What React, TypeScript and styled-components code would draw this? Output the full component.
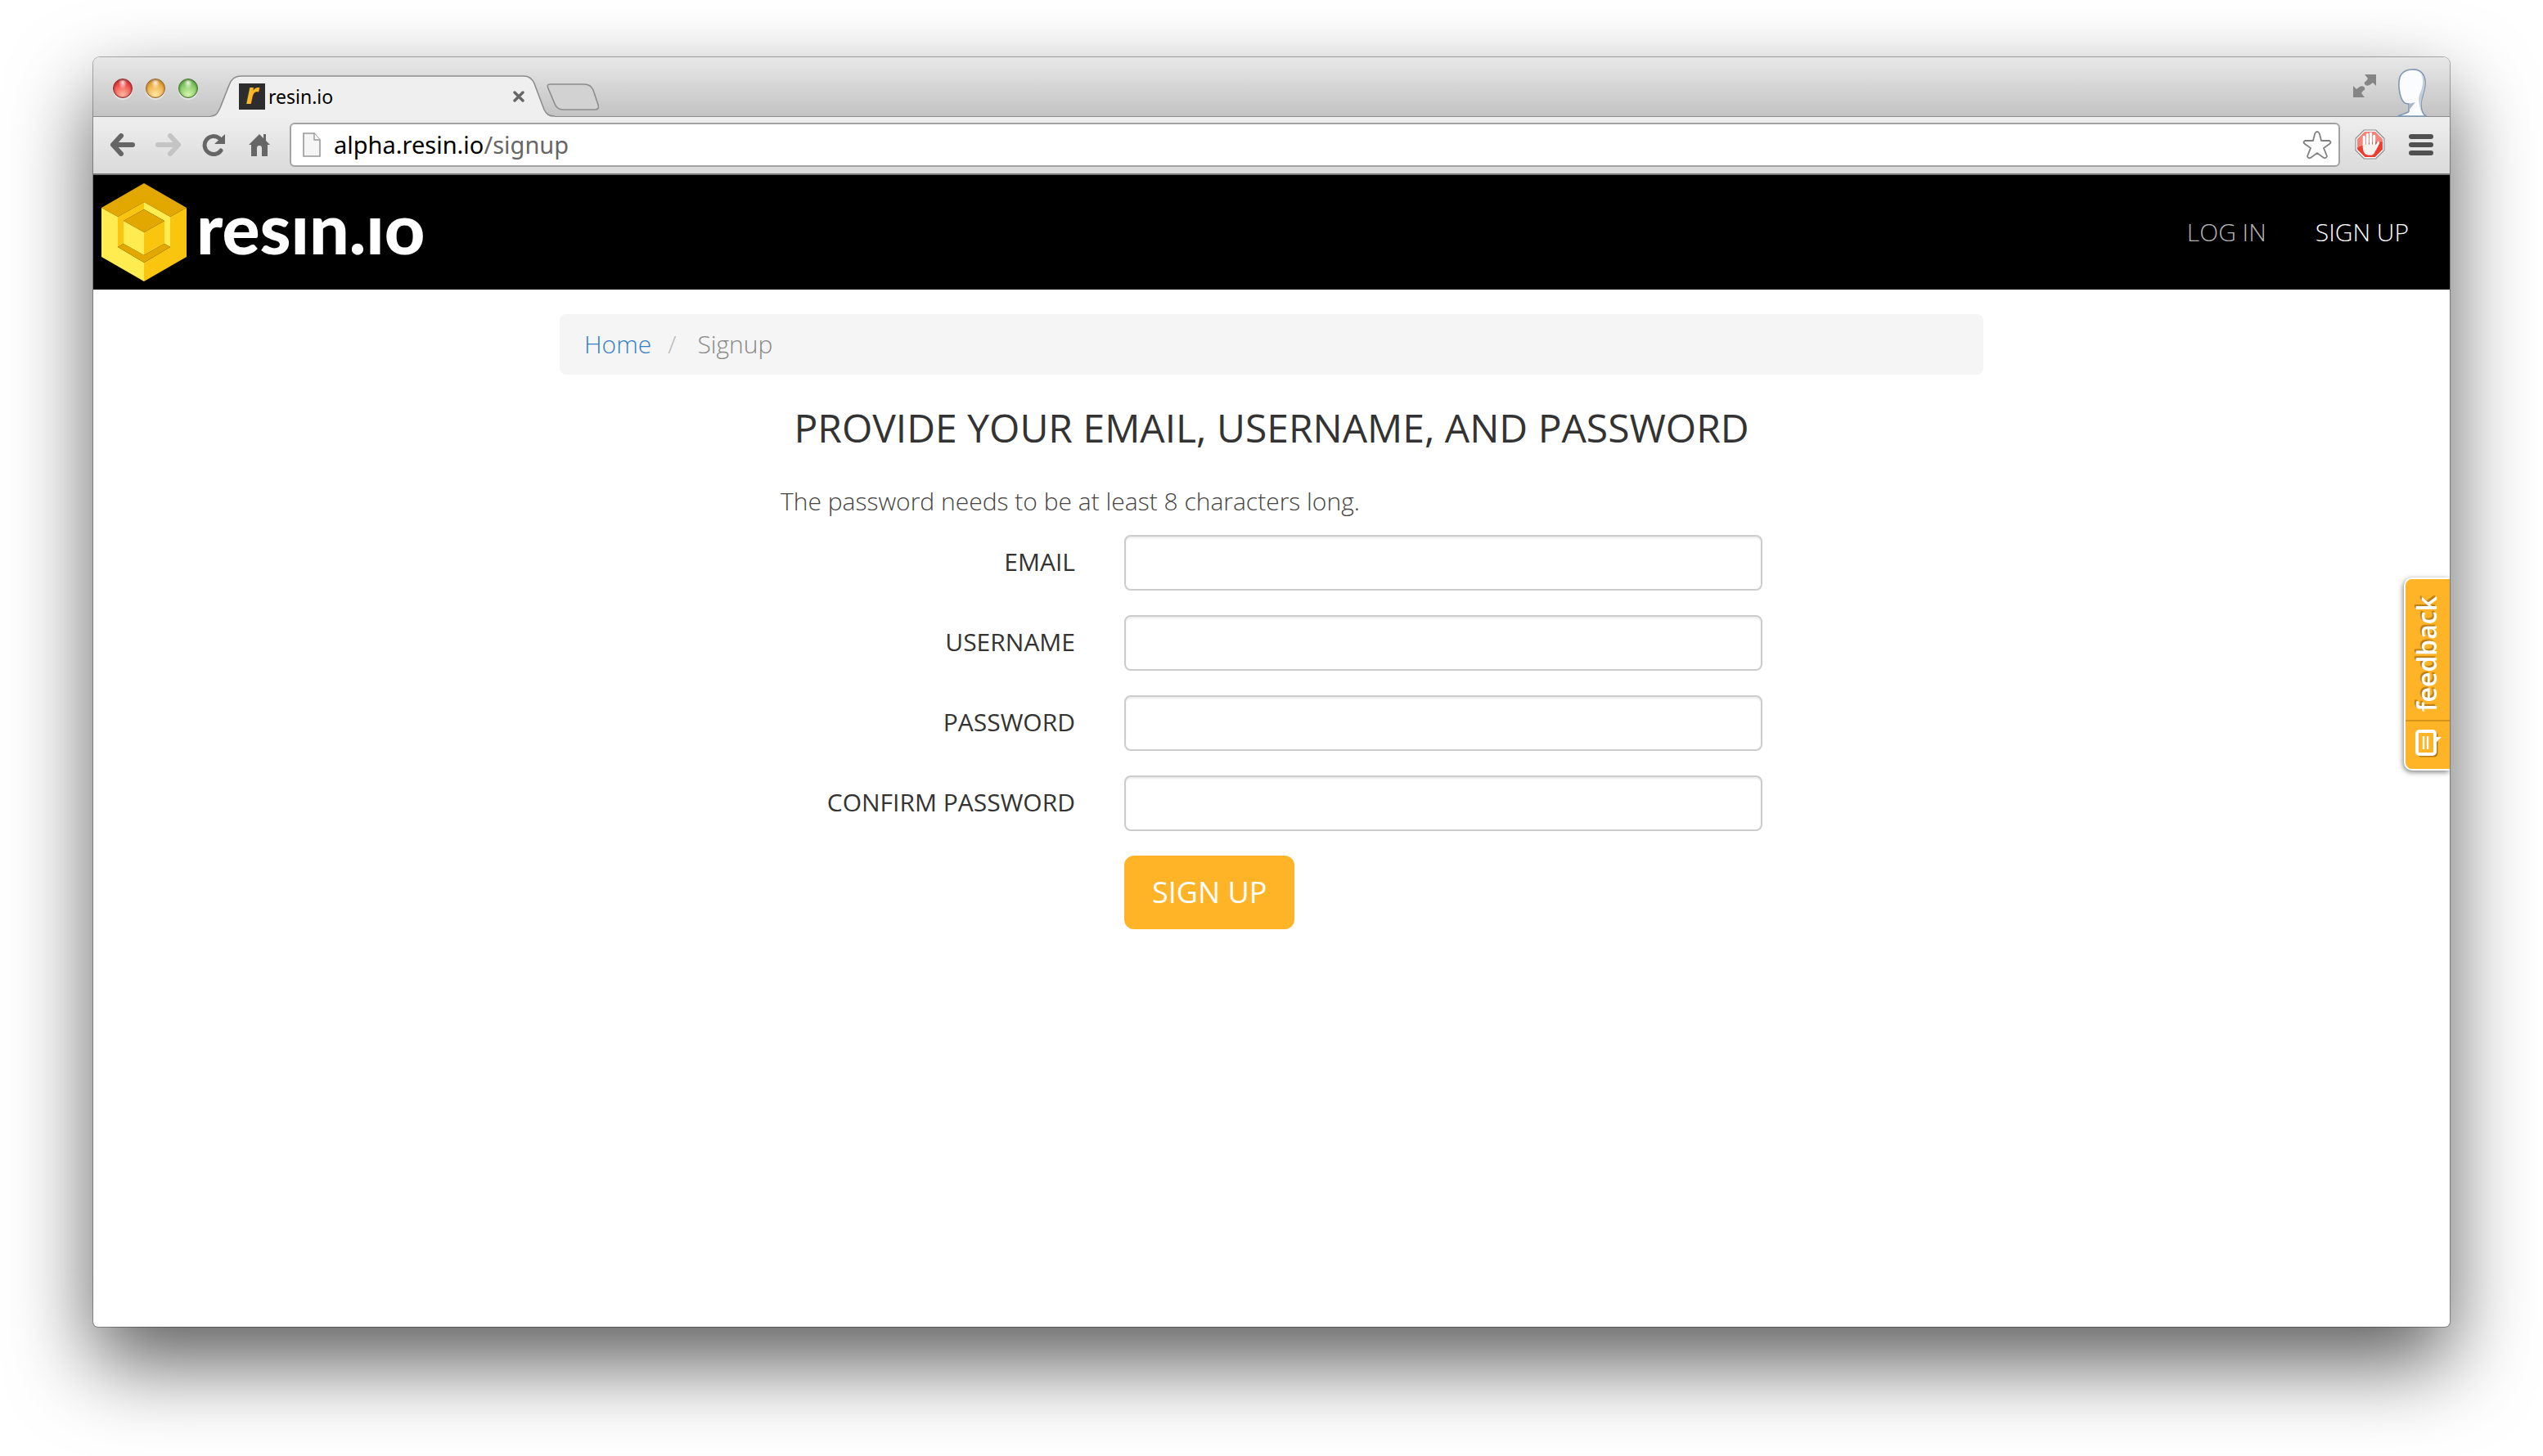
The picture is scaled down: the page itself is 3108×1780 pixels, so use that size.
import React from 'react';
import styled, { createGlobalStyle } from 'styled-components';

const Global = createGlobalStyle`
  * { box-sizing: border-box; }
  body { margin: 0; background: #fff; color: #333; font: 300 30px/46px "Open Sans", "Noto Sans", sans-serif; }
  button, input { font: inherit; }
`;

const Desktop = styled.div`
  min-height: 100vh;
  display: flex;
  padding: 70px 114px 158px;
`;

const Window = styled.div`
  flex: 1;
  min-width: 0;
  display: flex;
  flex-direction: column;
  position: relative;
  background: #fff;
  border-radius: 8px 8px 6px 6px;
  box-shadow: 0 0 0 1px rgba(0, 0, 0, 0.3), 0 44px 100px rgba(0, 0, 0, 0.64);
`;

const TabStrip = styled.div`
  height: 73px;
  display: flex;
  align-items: flex-end;
  padding: 0 28px 0 24px;
  border-radius: 8px 8px 0 0;
  background: linear-gradient(#e8e8e8, #c2c2c2);
  box-shadow: inset 0 -1px #8c8c8c;
`;

const Lights = styled.div`
  display: flex;
  gap: 16px;
  padding-bottom: 23px;
`;

const Light = styled.button<{ $from: string; $to: string; $edge: string }>`
  width: 24px;
  height: 24px;
  padding: 0;
  border: 1px solid ${(p) => p.$edge};
  border-radius: 50%;
  background: radial-gradient(ellipse at 50% 14%, rgba(255, 255, 255, 0.9), transparent 34%),
    radial-gradient(circle at 50% 85%, ${(p) => p.$to}, ${(p) => p.$from} 65%);
  box-shadow: inset 0 1px 3px ${(p) => p.$edge}, 0 2px 1px rgba(255, 255, 255, 0.5);
`;

const Tab = styled.div`
  position: relative;
  width: 420px;
  height: 51px;
  display: flex;
  align-items: center;
  margin-left: 16px;
  padding: 0 37px 0 34px;
  color: #000;
  font: 400 23px/32px "Noto Sans", "Open Sans", sans-serif;
`;

const TabShape = styled.svg`
  position: absolute;
  inset: 0;
  width: 100%;
  height: 100%;
`;

const Favicon = styled.span`
  position: relative;
  width: 32px;
  height: 32px;
  margin-right: 4px;
  background: #2d2d2d;
  color: #fdb827;
  font: italic 700 36px/24px "Noto Sans", sans-serif;
  text-align: center;
`;

const TabTitle = styled.span`
  position: relative;
  flex: 1;
`;

const IconButton = styled.button`
  position: relative;
  display: grid;
  place-items: center;
  padding: 0;
  border: 0;
  background: none;
`;

const NewTab = styled(IconButton)`
  margin: 0 auto 8px -10px;
`;

const Fullscreen = styled(IconButton)`
  margin: 0 26px 24px 0;
`;

const Toolbar = styled.div`
  height: 71px;
  display: flex;
  align-items: center;
  padding: 0 20px 2px;
  background: linear-gradient(#eeeeee, #dadada);
  border-bottom: 2px solid #777;
`;

const NavButtons = styled.div`
  display: flex;
  gap: 24px;
  margin-right: 22px;
`;

const Omnibox = styled.div`
  flex: 1;
  height: 54px;
  display: flex;
  align-items: center;
  gap: 16px;
  padding: 0 8px 0 14px;
  border: 2px solid #a3a3a3;
  border-radius: 6px;
  background: #fff;
  color: #666;
  font: 400 29px/36px "Noto Sans", "Open Sans", sans-serif;
`;

const Url = styled.span`
  flex: 1;
  b { color: #000; font-weight: 400; }
`;

const ToolIcons = styled.div`
  display: flex;
  align-items: center;
  gap: 29px;
  margin-left: 18px;
`;

const Header = styled.header`
  height: 140px;
  display: flex;
  align-items: center;
  justify-content: space-between;
  padding: 0 50px 0 10px;
  background: #000;
`;

const Brand = styled.a`
  display: flex;
  align-items: center;
  gap: 12px;
  color: #fff;
  text-decoration: none;
`;

const Wordmark = styled.span`
  padding-bottom: 12px;
  font: 900 86px/96px Lato, sans-serif;
`;

const Nav = styled.nav`
  display: flex;
  gap: 60px;
`;

const NavLink = styled.a<{ $active?: boolean }>`
  color: ${(p) => (p.$active ? '#fff' : '#b4b4b4')};
  text-decoration: none;
  text-transform: uppercase;
`;

const Main = styled.main`
  width: 100%;
  max-width: 1740px;
  margin: 0 auto;
  padding-top: 30px;
`;

const Breadcrumb = styled.nav`
  display: flex;
  padding: 14px 30px;
  border-radius: 8px;
  background: #f5f5f5;
  color: #888;
  a { color: #337fc4; text-decoration: none; }
`;

const Slash = styled.span`
  padding: 0 26px 0 20px;
  color: #bbb;
`;

const Title = styled.h1`
  margin: 38px 0 40px;
  color: #333;
  font-size: 48px;
  line-height: 54px;
  font-weight: 400;
  text-align: center;
  text-transform: uppercase;
`;

const Form = styled.form`
  display: grid;
  gap: 30px;
  max-width: 1200px;
  margin: 0 auto;
`;

const Hint = styled.p`
  margin: 0 0 -12px;
  color: #444;
`;

const Field = styled.div`
  display: grid;
  grid-template-columns: 360px 1fr;
  column-gap: 60px;
  align-items: center;
`;

const Label = styled.label`
  padding-bottom: 2px;
  font-weight: 400;
  text-align: right;
  text-transform: uppercase;
`;

const Input = styled.input`
  width: 100%;
  height: 68px;
  padding: 12px 24px;
  border: 2px solid #ccc;
  border-radius: 8px;
  background: #fff;
  box-shadow: inset 0 2px 2px rgba(0, 0, 0, 0.075);
  outline: 0;
`;

const Submit = styled.button`
  grid-column: 2;
  justify-self: start;
  padding: 20px 34px;
  border: 0;
  border-radius: 12px;
  background: #ffb427;
  color: #fff;
  font-size: 36px;
  line-height: 50px;
  font-weight: 400;
  text-transform: uppercase;
`;

const Feedback = styled.button`
  position: absolute;
  right: 0;
  top: 636px;
  height: 236px;
  width: 56px;
  display: flex;
  flex-direction: column;
  align-items: center;
  padding: 0;
  border: 2px solid #fff;
  border-right: 0;
  border-radius: 10px 0 0 10px;
  background: #ffb427;
  box-shadow: -1px 2px 6px rgba(0, 0, 0, 0.5);
  clip-path: inset(-12px 0 -12px -12px);
  color: #fff;
`;

const FeedbackText = styled.span`
  flex: 1;
  width: 100%;
  padding-top: 10px;
  border-top: 2px solid #d5941c;
  font: 600 32px/52px "Open Sans", sans-serif;
  text-align: start;
  text-shadow: 2px -2px 1px rgba(140, 90, 0, 0.6);
  writing-mode: vertical-rl;
  transform: rotate(180deg);
`;

const FeedbackIcon = styled.svg`
  margin: 10px 0 14px;
`;

const Cube = () => (
  <svg width="104" height="120" viewBox="0 0 104 120" aria-hidden="true">
    <path fill="#e2a800" d="M52 0 104 30 84 41 52 23 20 41 0 30Z" />
    <path fill="#ffec51" d="M0 30 20 41V78L52 97V120L0 90Z" />
    <path fill="#f9c50f" d="M104 30V90L52 120V97L84 78V41Z" />
    <path fill="#f9c50f" d="M52 23V32L27 46V74L20 78V41Z" />
    <path fill="#ffec51" d="M52 23 84 41V78L77 74V46L52 32Z" />
    <path fill="#e2a800" d="M20 78 27 74 52 88 77 74 84 78 52 97Z" />
    <path fill="#e2a800" d="M52 32 77 46 52 60 27 46Z" />
    <path fill="#ffec51" d="M27 46 52 60V88L27 74Z" />
    <path fill="#f9c50f" d="M77 46V74L52 88V60Z" />
  </svg>
);

const Arrow = ({ color, flip }: { color: string; flip?: boolean }) => (
  <svg width="32" height="28" viewBox="0 0 32 28" aria-hidden="true">
    <path
      d={flip ? 'M3 14H28M18 3 28 14 18 25' : 'M28 14H4M14 3 4 14 14 25'}
      fill="none" stroke={color} strokeWidth="6" strokeLinecap="round" strokeLinejoin="round"
    />
  </svg>
);

const fields = [
  { id: 'email', label: 'Email', type: 'email' },
  { id: 'username', label: 'Username', type: 'text' },
  { id: 'password', label: 'Password', type: 'password' },
  { id: 'confirm', label: 'Confirm password', type: 'password' },
];

export default function App() {
  return (
    <>
      <Global />
      <Desktop>
        <Window>
          <TabStrip>
            <Lights>
              <Light aria-label="Close window" $from="#ee4444" $to="#ffb8a0" $edge="#8f2a2a" />
              <Light aria-label="Minimize window" $from="#eda73b" $to="#ffeaa6" $edge="#93662a" />
              <Light aria-label="Zoom window" $from="#7cc45c" $to="#d5f7ad" $edge="#40722c" />
            </Lights>
            <Tab>
              <TabShape viewBox="0 0 420 51" preserveAspectRatio="none">
                <path
                  d="M0 50C6 50 8 46 11 40L22 12Q26 1 36 1H382Q391 1 395 10L407 42C410 48 413 50 420 50V51H0Z"
                  fill="#efefef"
                />
                <path
                  d="M0 50C6 50 8 46 11 40L22 12Q26 1 36 1H382Q391 1 395 10L407 42C410 48 413 50 420 50"
                  fill="none" stroke="#8c8c8c" strokeWidth="1.6"
                />
              </TabShape>
              <Favicon aria-hidden="true">r</Favicon>
              <TabTitle>resin.io</TabTitle>
              <IconButton aria-label="Close tab">
                <svg width="14" height="14" viewBox="0 0 14 14">
                  <path d="M2 2 12 12M12 2 2 12" stroke="#666" strokeWidth="3.4" strokeLinecap="round" />
                </svg>
              </IconButton>
            </Tab>
            <NewTab aria-label="New tab">
              <svg width="64" height="33" viewBox="0 0 64 33">
                <path
                  d="M4 1H46Q54 1 57 8L63 26Q65 32 59 32H20Q13 32 10 25L2 6Q0 1 4 1Z"
                  fill="#d2d2d2" stroke="#8c8c8c" strokeWidth="1.6"
                />
              </svg>
            </NewTab>
            <Fullscreen aria-label="Full screen">
              <svg width="28" height="28" viewBox="0 0 28 28" fill="#858585">
                <path d="M14 0H28V14L24 10 20 13Q16 15 14 12Q13 9 16 8L18 5Z" />
                <path d="M14 28H0V14L4 18 8 15Q12 13 14 16Q15 19 12 20L10 23Z" />
              </svg>
            </Fullscreen>
            <svg width="36" height="59" viewBox="0 0 36 59" aria-hidden="true">
              <path
                d="M17 1C29 0 35 8 34 20C33 30 29 36 29 43C29 50 30 55 35 58H1C5 55 12 55 14 52V43C7 43 5 38 3 30C0 14 2 2 17 1Z"
                fill="#fbfcfd" stroke="#7f98b5" strokeWidth="1.6"
              />
              <path d="M29 7C33 12 31 24 27 32C25 37 27 46 29 52C28 42 30 35 32 28C35 18 34 10 29 7Z" fill="#c3ced9" />
              <path d="M14 43 22 41 14 51Z" fill="#a9b6c4" />
            </svg>
          </TabStrip>
          <Toolbar>
            <NavButtons>
              <IconButton aria-label="Back"><Arrow color="#666" /></IconButton>
              <IconButton aria-label="Forward"><Arrow color="#c4c4c4" flip /></IconButton>
              <IconButton aria-label="Reload">
                <svg width="30" height="28" viewBox="0 0 30 28">
                  <path d="M24 21A11 11 0 1 1 22 6" fill="none" stroke="#666" strokeWidth="5" strokeLinecap="round" />
                  <path d="M29 1V13H16Z" fill="#666" />
                </svg>
              </IconButton>
              <IconButton aria-label="Home">
                <svg width="32" height="28" viewBox="0 0 32 28" fill="#666">
                  <path d="M17 1 22 6V1H25V9L30 14H27V28H20V18Q20 15 17 15T14 18V28H7V14H4Z" />
                </svg>
              </IconButton>
            </NavButtons>
            <Omnibox>
              <svg width="22" height="30" viewBox="0 0 22 30" aria-hidden="true">
                <path d="M1 1H14L21 9V29H1Z" fill="#f5f5f5" stroke="#999" strokeWidth="1.6" />
                <path d="M14 1V9H21" fill="#fff" stroke="#999" strokeWidth="1.4" />
              </svg>
              <Url><b>alpha.resin.io</b>/signup</Url>
              <IconButton aria-label="Bookmark this page">
                <svg width="36" height="36" viewBox="0 0 36 36">
                  <path
                    d="M18 2C20 2 20 3 21 5L23 13 33 13Q36 15 33 17L26 22 30 32Q29 35 26 34L18 28 10 34Q7 35 6 32L10 22 3 17Q0 15 3 13L13 13 15 5C16 3 16 2 18 2Z"
                    fill="#fff" stroke="#808080" strokeWidth="1.8"
                  />
                </svg>
              </IconButton>
            </Omnibox>
            <ToolIcons>
              <IconButton aria-label="Ad blocker">
                <svg width="37" height="37" viewBox="0 0 36 36">
                  <path d="M11 1H25L35 11V25L25 35H11L1 25V11Z" fill="#fff" stroke="#888" strokeWidth="1" />
                  <path d="M12 3H24L33 12V24L24 33H12L3 24V12Z" fill="#f03a2e" />
                  <path d="M12 3H24L33 12V15Q18 14 3 22V12Z" fill="#f7847b" />
                  <path
                    d="M11 20V9M15 18V6M19 18V5M23 20V8M24 24 28 16"
                    stroke="#fff" strokeWidth="3" strokeLinecap="round"
                  />
                  <path d="M9.500 18H24.500L26 20C24 28 23 31 18 31S10 29 9.500 22Z" fill="#f4f1ef" />
                </svg>
              </IconButton>
              <IconButton aria-label="Menu">
                <svg width="30" height="28" viewBox="0 0 30 28" fill="#505050">
                  <rect y="1" width="30" height="6" rx="3" />
                  <rect y="11" width="30" height="6" rx="3" />
                  <rect y="21" width="30" height="6" rx="3" />
                </svg>
              </IconButton>
            </ToolIcons>
          </Toolbar>
          <Header>
            <Brand href="#"><Cube /><Wordmark>resın.ıo</Wordmark></Brand>
            <Nav>
              <NavLink href="#">Log in</NavLink>
              <NavLink href="#" $active>Sign up</NavLink>
            </Nav>
          </Header>
          <Main>
            <Breadcrumb aria-label="Breadcrumb">
              <a href="#">Home</a><Slash>/</Slash><span>Signup</span>
            </Breadcrumb>
            <Title>Provide your email, username, and password</Title>
            <Form>
              <Hint>The password needs to be at least 8 characters long.</Hint>
              {fields.map((f) => (
                <Field key={f.id}>
                  <Label htmlFor={f.id}>{f.label}</Label>
                  <Input id={f.id} type={f.type} />
                </Field>
              ))}
              <Field><Submit type="button">Sign up</Submit></Field>
            </Form>
          </Main>
          <Feedback>
            <FeedbackText>feedback</FeedbackText>
            <FeedbackIcon width="34" height="34" viewBox="0 0 34 34">
              <rect x="6" y="4" width="22" height="28" rx="3" fill="none" stroke="#b67c12" strokeWidth="3" />
              <rect x="4" y="2" width="22" height="28" rx="3" fill="#ffb427" stroke="#fff" strokeWidth="4" />
              <path d="M26 9 34 9 26 17Z" fill="#fff" />
              <path d="M12 8V24M17 8V24" stroke="#fff" strokeWidth="2.400" />
            </FeedbackIcon>
          </Feedback>
        </Window>
      </Desktop>
    </>
  );
}
